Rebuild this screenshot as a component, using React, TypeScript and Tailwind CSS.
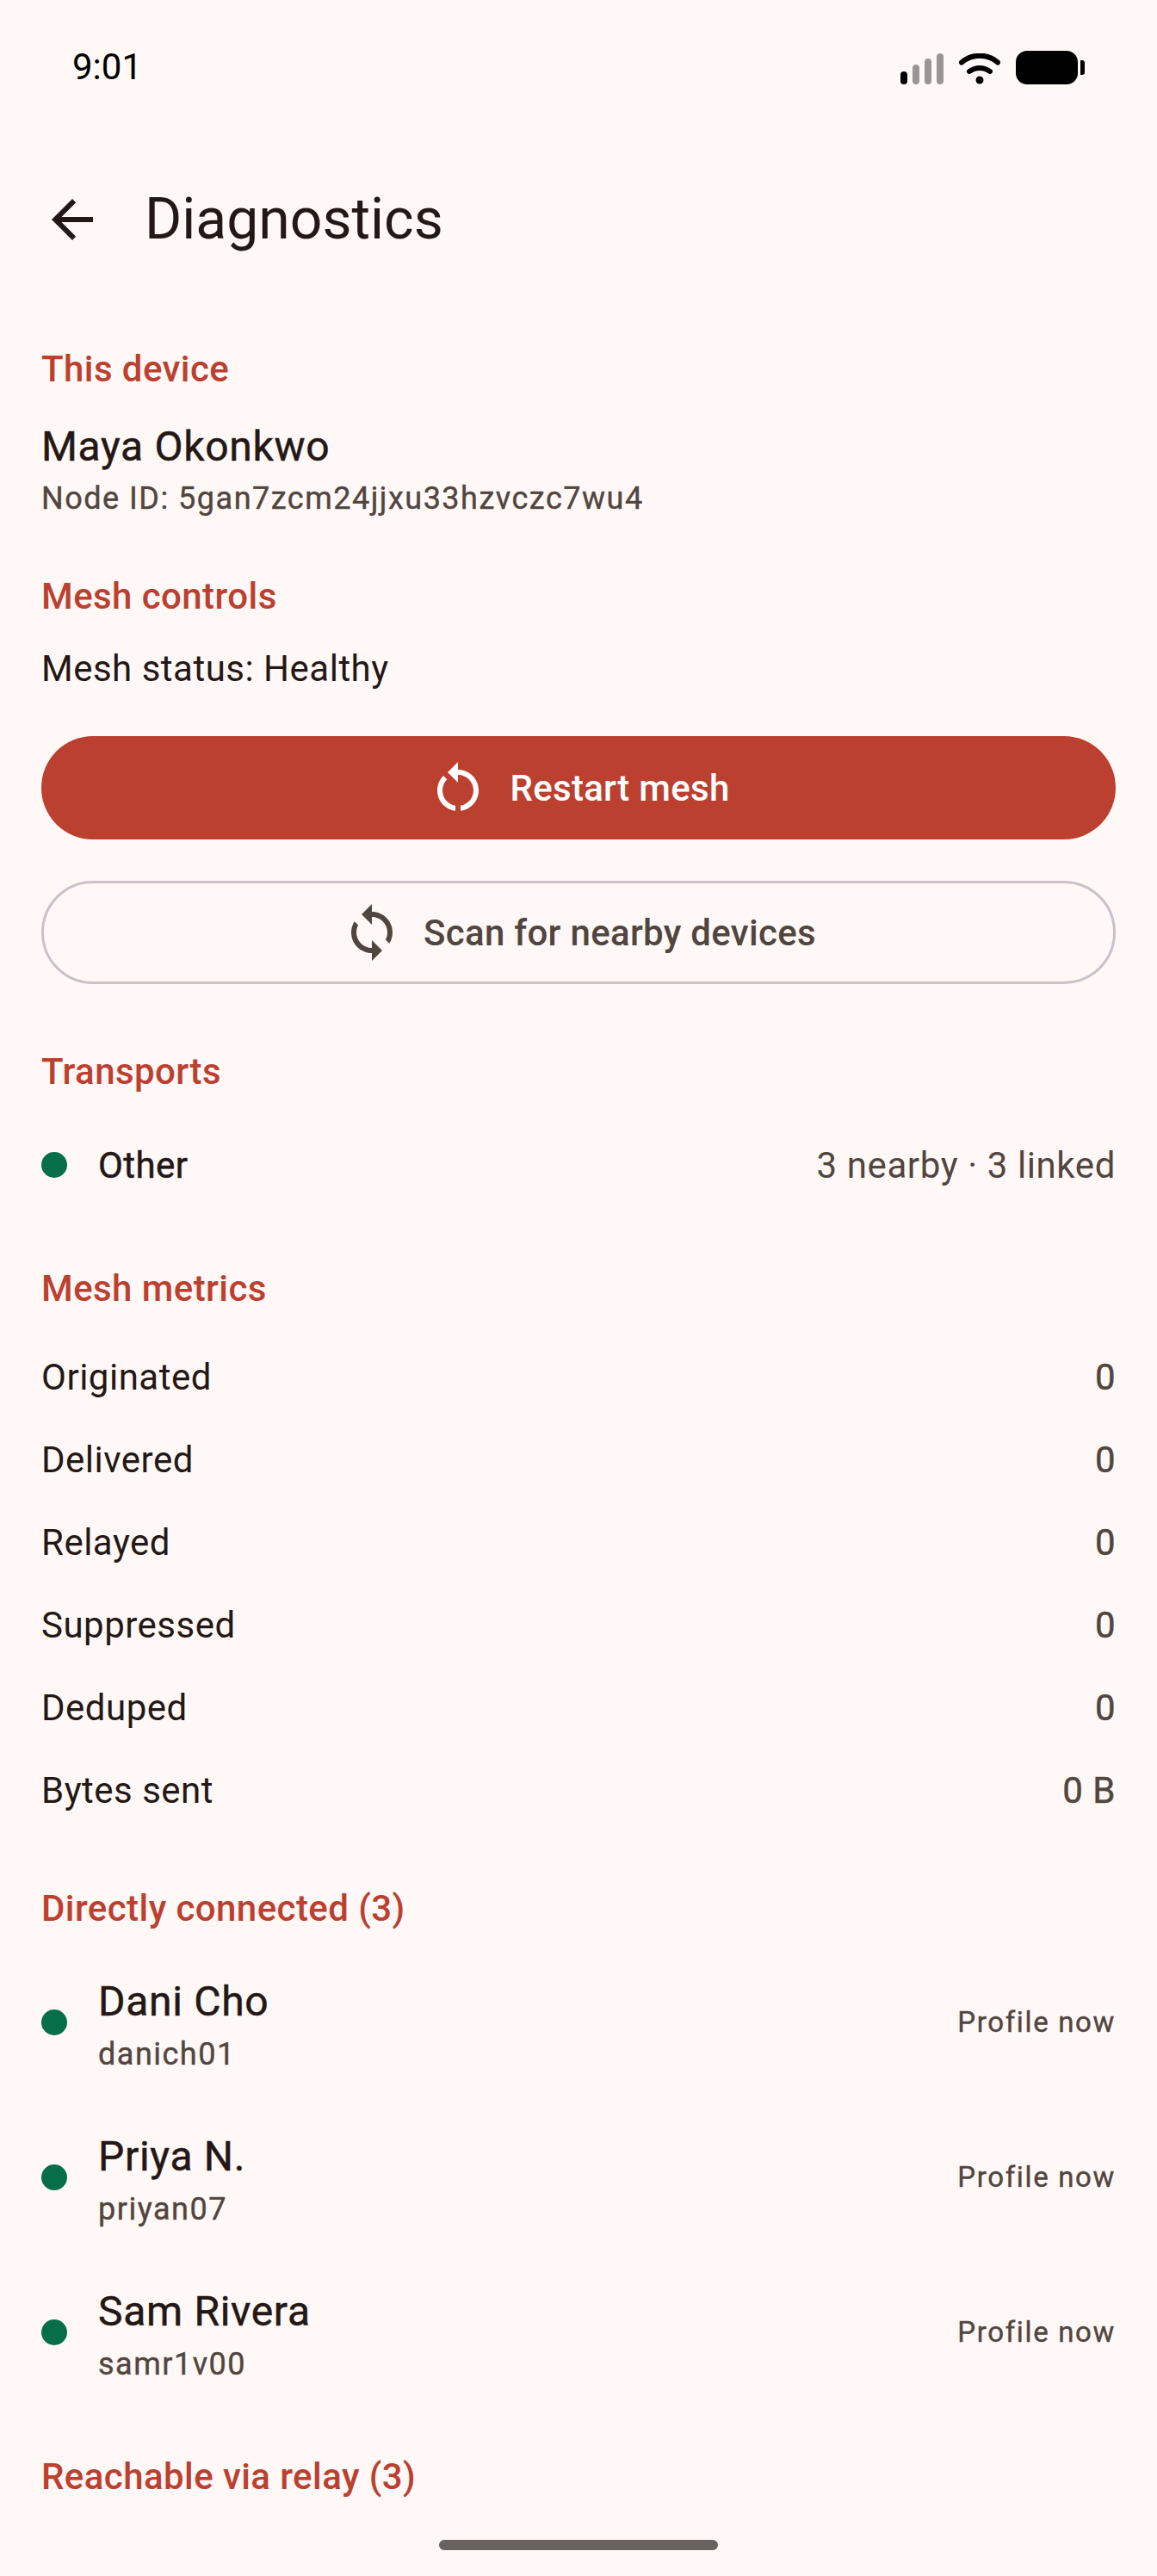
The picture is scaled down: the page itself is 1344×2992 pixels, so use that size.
import React from 'react';

const metrics = [
  { label: 'Originated', value: '0' },
  { label: 'Delivered', value: '0' },
  { label: 'Relayed', value: '0' },
  { label: 'Suppressed', value: '0' },
  { label: 'Deduped', value: '0' },
  { label: 'Bytes sent', value: '0 B' },
];

const peers = [
  { name: 'Dani Cho', handle: 'danich01' },
  { name: 'Priya N.', handle: 'priyan07' },
  { name: 'Sam Rivera', handle: 'samr1v00' },
];

const SectionTitle: React.FC<{ children: React.ReactNode; className?: string }> = ({ children, className }) => (
  <h2 className={`text-[42px] leading-[60px] font-medium tracking-[0.42px] text-[#bb4030] ${className ?? ''}`}>{children}</h2>
);

const Dot = () => <span className="w-[30px] h-[30px] rounded-full bg-[#066f48] shrink-0" />;

const StatusIcons = () => (
  <div className="flex items-end gap-[18px]">
    <div className="flex items-end gap-[6px] h-[36px]">
      <span className="w-[8px] h-[15px] rounded-full bg-black" />
      <span className="w-[8px] h-[23px] rounded-full bg-[#9b9593]" />
      <span className="w-[8px] h-[30px] rounded-full bg-[#9b9593]" />
      <span className="w-[8px] h-[36px] rounded-full bg-[#9b9593]" />
    </div>
    <svg width="48" height="36" viewBox="0 0 48 36" fill="none" stroke="black" strokeLinecap="round">
      <path d="M3 10.5C15 0 33 0 45 10.5" strokeWidth="6" />
      <path d="M12 21C19 15.5 29 15.5 36 21" strokeWidth="6" />
      <circle cx="24" cy="31" r="4.5" fill="black" stroke="none" />
    </svg>
    <div className="flex items-center gap-[3px] ml-0">
      <span className="w-[72px] h-[39px] rounded-[13px] bg-black" />
      <span className="w-[5px] h-[17px] rounded-r-[3px] bg-black" />
    </div>
  </div>
);

export default function App() {
  return (
    <div className="relative w-[1344px] h-[2992px] overflow-hidden bg-[#fff8f6] text-[#231815] font-['Roboto',sans-serif]">
      <div className="flex items-center justify-between h-[78px] mt-[39px] pl-[84px] pr-[84px]">
        <span className="text-[42px] leading-[54px] text-black">9:01</span>
        <StatusIcons />
      </div>

      <header className="flex items-center h-[72px] mt-[102px] pl-[48px]">
        <svg className="shrink-0" width="72" height="72" viewBox="0 0 24 24" fill="#231815">
          <path d="M20 11H7.83l5.59-5.59L12 4l-8 8 8 8 1.41-1.41L7.83 13H20v-2z" />
        </svg>
        <h1 className="ml-[48px] text-[66px] leading-[84px]">Diagnostics</h1>
      </header>

      <main className="px-[48px] pt-[108px]">
        <SectionTitle>This device</SectionTitle>
        <p className="mt-[30px] text-[48px] leading-[60px] tracking-[0.7px] [-webkit-text-stroke:0.5px_currentColor]">Maya Okonkwo</p>
        <p className="mt-[6px] text-[36px] leading-[48px] text-[#51453f] tracking-[1.5px] [-webkit-text-stroke:0.4px_currentColor]">
          Node ID: 5gan7zcm24jjxu33hzvczc7wu4
        </p>

        <SectionTitle className="mt-[60px]">Mesh controls</SectionTitle>
        <p className="mt-[24px] text-[42px] leading-[60px] tracking-[0.5px]">Mesh status: Healthy</p>

        <button className="mt-[48px] flex items-center justify-center gap-[24px] w-full h-[120px] rounded-full bg-[#bb4030] text-white text-[42px] font-medium tracking-[0.3px]">
          <svg width="72" height="72" viewBox="0 0 24 24" fill="currentColor">
            <path d="M12 5V2L8 6l4 4V7c3.31 0 6 2.69 6 6 0 2.97-2.17 5.43-5 5.91v2.02c3.95-.49 7-3.85 7-7.93 0-4.42-3.58-8-8-8zm-6 8c0-1.65.67-3.15 1.76-4.24L6.34 7.34C4.9 8.79 4 10.79 4 13c0 4.08 3.05 7.44 7 7.93v-2.02c-2.83-.48-5-2.94-5-5.91z" />
          </svg>
          Restart mesh
        </button>
        <button className="mt-[48px] flex items-center justify-center gap-[24px] w-full h-[120px] rounded-full border-[3px] border-[#c9c2c8] text-[#51453f] text-[42px] font-medium tracking-[0.3px]">
          <svg width="72" height="72" viewBox="0 0 24 24" fill="currentColor">
            <path d="M12 4V1L8 5l4 4V6c3.31 0 6 2.69 6 6 0 1.01-.25 1.97-.7 2.8l1.46 1.46C19.54 15.03 20 13.57 20 12c0-4.42-3.58-8-8-8zm0 14c-3.31 0-6-2.69-6-6 0-1.01.25-1.97.7-2.8L5.24 7.74C4.46 8.97 4 10.43 4 12c0 4.42 3.58 8 8 8v3l4-4-4-4v3z" />
          </svg>
          Scan for nearby devices
        </button>

        <SectionTitle className="mt-[72px]">Transports</SectionTitle>
        <div className="mt-[48px] flex items-center h-[60px]">
          <Dot />
          <span className="ml-[36px] text-[42px] tracking-[0.45px] [-webkit-text-stroke:0.5px_currentColor]">Other</span>
          <span className="ml-auto text-[42px] text-[#51453f] tracking-[0.6px]">3 nearby · 3 linked</span>
        </div>

        <SectionTitle className="mt-[84px]">Mesh metrics</SectionTitle>
        <div className="mt-[24px]">
          {metrics.map((metric) => (
            <div key={metric.label} className="flex items-center justify-between h-[96px] text-[42px] tracking-[0.5px]">
              <span>{metric.label}</span>
              <span className="text-[#51453f] [-webkit-text-stroke:0.5px_currentColor]">{metric.value}</span>
            </div>
          ))}
        </div>

        <SectionTitle className="mt-[60px]">Directly connected (3)</SectionTitle>
        <div className="mt-[12px]">
          {peers.map((peer) => (
            <div key={peer.handle} className="flex items-center h-[180px]">
              <Dot />
              <div className="ml-[36px] pt-[3px]">
                <p className="text-[48px] leading-[66px] tracking-[0.7px] [-webkit-text-stroke:0.5px_currentColor]">{peer.name}</p>
                <p className="mt-[4px] text-[36px] leading-[48px] text-[#51453f] tracking-[1.5px] [-webkit-text-stroke:0.4px_currentColor]">{peer.handle}</p>
              </div>
              <span className="ml-auto text-[33px] text-[#51453f] tracking-[1.65px] [-webkit-text-stroke:0.4px_currentColor]">Profile now</span>
            </div>
          ))}
        </div>

        <SectionTitle className="mt-[48px]">Reachable via relay (3)</SectionTitle>
      </main>

      <div className="absolute left-[510px] top-[2950px] w-[324px] h-[12px] rounded-full bg-[#696360]" />
    </div>
  );
}
